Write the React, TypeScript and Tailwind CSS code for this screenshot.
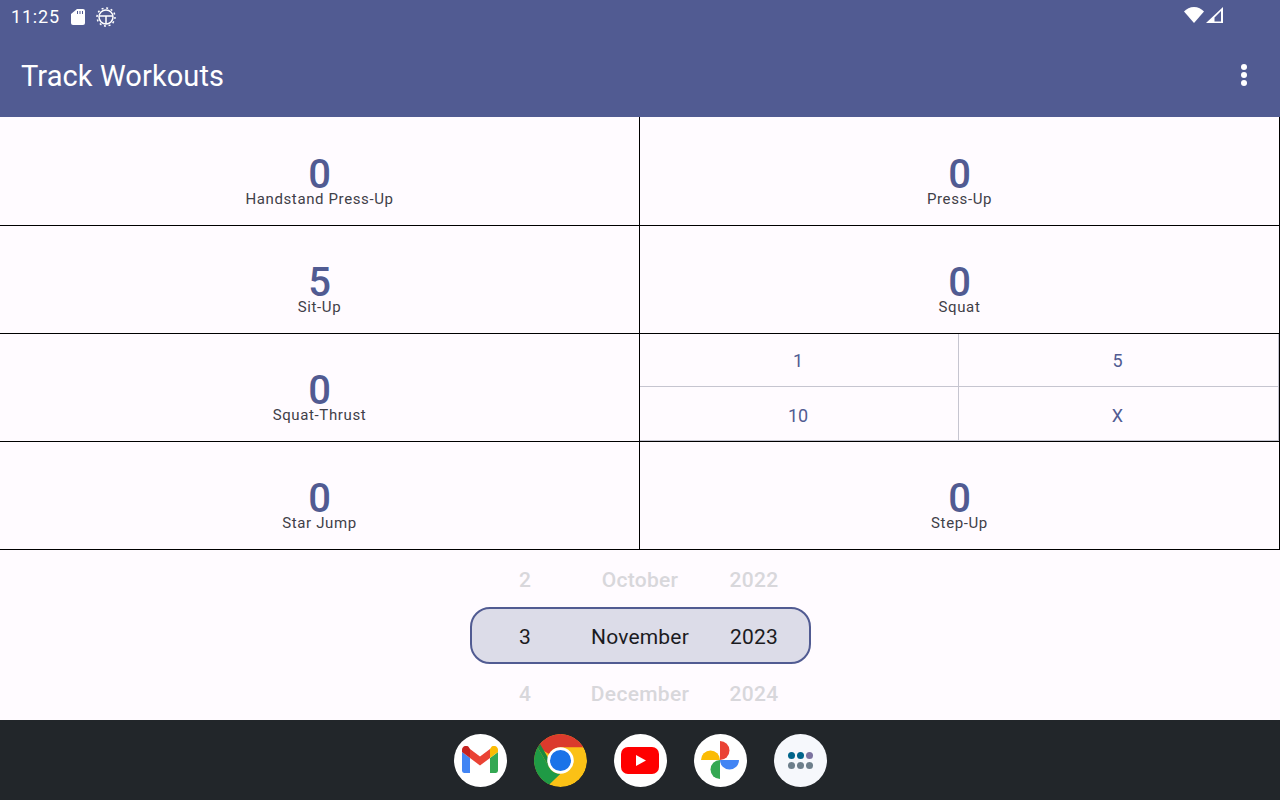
const cellBorder = "border-b border-black";

function Tile({ count, name, first }: { count: string; name: string; first?: boolean }) {
  return (
    <div className={`flex w-[640px] flex-col items-center border-r ${cellBorder} ${first ? "h-[109px] pt-[43px]" : "h-[108px] pt-[42px]"}`}>
      <div className="text-[40px] leading-[30px] font-medium text-[#515b92]">{count}</div>
      <div className="text-[15px] leading-[18px] tracking-[0.62px] text-[#3f4048]">{name}</div>
    </div>
  );
}

function QuickButtons() {
  const btn = "flex items-center justify-center pr-[2px] text-[18px] font-[450] text-[#515b92]";
  return (
    <div className={`flex h-[108px] w-[640px] flex-col border-r ${cellBorder}`}>
      <div className="flex h-[53px] border-b border-[#c6c5d0]">
        <div className={`${btn} w-[319px] border-r border-[#c6c5d0]`}>1</div>
        <div className={`${btn} flex-1 border-r border-[#c6c5d0]`}>5</div>
      </div>
      <div className="flex h-[54px] border-b border-[#c6c5d0]">
        <div className={`${btn} w-[319px] border-r border-[#c6c5d0] pt-[3px]`}>10</div>
        <div className={`${btn} flex-1 border-r border-[#c6c5d0] pt-[3px]`}>X</div>
      </div>
    </div>
  );
}

function DateRow({ day, month, year, active }: { day: string; month: string; year: string; active?: boolean }) {
  return (
    <div className={`flex h-[57px] items-center text-[21px] ${active ? "font-[450] tracking-[0.2px] text-[#1b1b1f]" : "font-medium tracking-[0.3px] text-[#d8d7db]"}`}>
      <span className="w-[40px] text-center">{day}</span>
      <span className="ml-[35px] w-[120px] text-center">{month}</span>
      <span className="ml-[24px] w-[60px] text-center">{year}</span>
    </div>
  );
}

function GmailIcon() {
  return (
    <svg width="36" height="28" viewBox="0 0 36 28">
      <path d="M2 27h6V12L0 6v18.5A2.5 2.5 0 0 0 2 27z" fill="#4285f4" />
      <path d="M28 27h6a2.5 2.5 0 0 0 2-2.500V6l-8 6z" fill="#34a853" />
      <path d="M28 3v9l8-6V4c0-3.500-4-5.500-6.500-3.200z" fill="#fbbc04" />
      <path d="M8 12V3l10 7.500L28 3v9l-10 7.500z" fill="#ea4335" />
      <path d="M0 4v2l8 6V3L6.500.8C4-1.500 0 .5 0 4z" fill="#c5221f" />
    </svg>
  );
}

function ChromeIcon() {
  return (
    <svg width="53" height="53" viewBox="0 0 48 48">
      <circle cx="24" cy="24" r="24" fill="#fbc116" />
      <path d="M24 0a24 24 0 0 1 20.800 12H24a12 12 0 0 0-10.400 6L3.200 12A24 24 0 0 1 24 0z" fill="#db3a2c" />
      <path d="M3.200 12l10.400 18a12 12 0 0 0 10.400 6L13.600 46A24 24 0 0 1 3.200 12z" fill="#1f9a45" />
      <path d="M3.200 12l10.400 18 3-1.800L5.500 9z" fill="#1a8a3e" />
      <circle cx="24" cy="24" r="12" fill="#ffffff" />
      <circle cx="24" cy="24" r="9.500" fill="#1a73e8" />
    </svg>
  );
}

function YoutubeIcon() {
  return (
    <svg width="38" height="27" viewBox="0 0 38 27">
      <rect width="38" height="27" rx="7" fill="#ff0000" />
      <path d="M15 8l10 5.500L15 19z" fill="#ffffff" />
    </svg>
  );
}

function PhotosIcon() {
  return (
    <svg width="38" height="38" viewBox="0 0 38 38">
      <path d="M19 19V0a9.500 9.500 0 0 1 0 19z" fill="#ea4335" />
      <path d="M19 19h19a9.500 9.500 0 0 1-19 0z" fill="#4285f4" />
      <path d="M19 19v19a9.500 9.500 0 0 1 0-19z" fill="#34a853" />
      <path d="M19 19H0a9.500 9.500 0 0 1 19 0z" fill="#fbbc04" />
    </svg>
  );
}

function AppsIcon() {
  const dots = ["bg-[#00658b]", "bg-[#00658b]", "bg-[#7b739f]", "bg-[#6d7f8b]", "bg-[#6d7f8b]", "bg-[#6d7f8b]"];
  return (
    <div className="grid grid-cols-3 gap-x-[2px] gap-y-[3px]">
      {dots.map((c, i) => (
        <span key={i} className={`h-[7px] w-[7px] rounded-full ${c}`} />
      ))}
    </div>
  );
}

function DockIcon({ children, bg = "bg-white" }: { children: React.ReactNode; bg?: string }) {
  return <div className={`flex h-[53px] w-[53px] items-center justify-center overflow-hidden rounded-full ${bg}`}>{children}</div>;
}

export default function App() {
  return (
    <div className="flex h-[800px] w-[1280px] flex-col overflow-hidden bg-[#fffbff] font-['Roboto',sans-serif]">
      <header className="h-[117px] shrink-0 bg-[#515b92] text-white">
        <div className="flex h-[33px] items-center pl-[11px] pr-[57px]">
          <span className="text-[18px] tracking-[0.8px]">11:25</span>
          <svg className="ml-[11px]" width="14" height="16" viewBox="0 0 14 16">
            <path d="M6 0h6a2 2 0 0 1 2 2v12a2 2 0 0 1-2 2H2a2 2 0 0 1-2-2V5z" fill="#fff" />
            <path d="M6 2h1v3H6zM8.500 2h1v3h-1zM11 2h1v3h-1z" fill="#515b92" />
          </svg>
          <svg className="ml-[11px]" width="20" height="20" viewBox="0 0 20 20" fill="none" stroke="#fff">
            <circle cx="10" cy="10" r="7" strokeWidth="1.500" />
            <circle cx="10" cy="10" r="9" strokeWidth="1.500" strokeDasharray="2 2.700" />
            <path d="M3 9h14M10 9v8" strokeWidth="1.500" />
          </svg>
          <div className="mb-[3px] ml-auto flex items-center gap-[2px]">
            <svg width="20" height="16" viewBox="0 0 20 16">
              <path d="M10 16L0 4.500C2.500 1.800 6 0 10 0s7.500 1.800 10 4.500z" fill="#fff" />
            </svg>
            <svg width="17" height="16" viewBox="0 0 17 16">
              <path d="M0 16L17 0v16zM8.500 14.500h6.500V4l-6.500 6.500z" fill="#fff" fillRule="evenodd" />
            </svg>
          </div>
        </div>
        <div className="flex h-[84px] items-center justify-between pl-[21px] pr-[33px]">
          <h1 className="pt-[2px] text-[29px] font-normal leading-[36px] tracking-[0.1px]">Track Workouts</h1>
          <div className="flex flex-col gap-[2px]">
            <span className="h-[6px] w-[6px] rounded-full bg-white" />
            <span className="h-[6px] w-[6px] rounded-full bg-white" />
            <span className="h-[6px] w-[6px] rounded-full bg-white" />
          </div>
        </div>
      </header>

      <main className="flex flex-wrap">
        <Tile count="0" name="Handstand Press-Up" first />
        <Tile count="0" name="Press-Up" first />
        <Tile count="5" name="Sit-Up" />
        <Tile count="0" name="Squat" />
        <Tile count="0" name="Squat-Thrust" />
        <QuickButtons />
        <Tile count="0" name="Star Jump" />
        <Tile count="0" name="Step-Up" />
      </main>

      <section className="flex h-[170px] justify-center">
        <div className="relative mt-[2px] w-[340px]">
          <div className="absolute left-0 top-[55px] h-[57px] w-[341px] rounded-[20px] border-2 border-[#515b92] bg-[#dcdce8]" />
          <div className="relative ml-[35px]">
            <DateRow day="2" month="October" year="2022" />
            <DateRow day="3" month="November" year="2023" active />
            <DateRow day="4" month="December" year="2024" />
          </div>
        </div>
      </section>

      <footer className="flex h-[80px] shrink-0 items-center justify-center gap-[27px] bg-[#22262a]">
        <DockIcon><GmailIcon /></DockIcon>
        <DockIcon bg="bg-transparent"><ChromeIcon /></DockIcon>
        <DockIcon><YoutubeIcon /></DockIcon>
        <DockIcon><PhotosIcon /></DockIcon>
        <DockIcon bg="bg-[#f6f8fc]"><AppsIcon /></DockIcon>
      </footer>
    </div>
  );
}
